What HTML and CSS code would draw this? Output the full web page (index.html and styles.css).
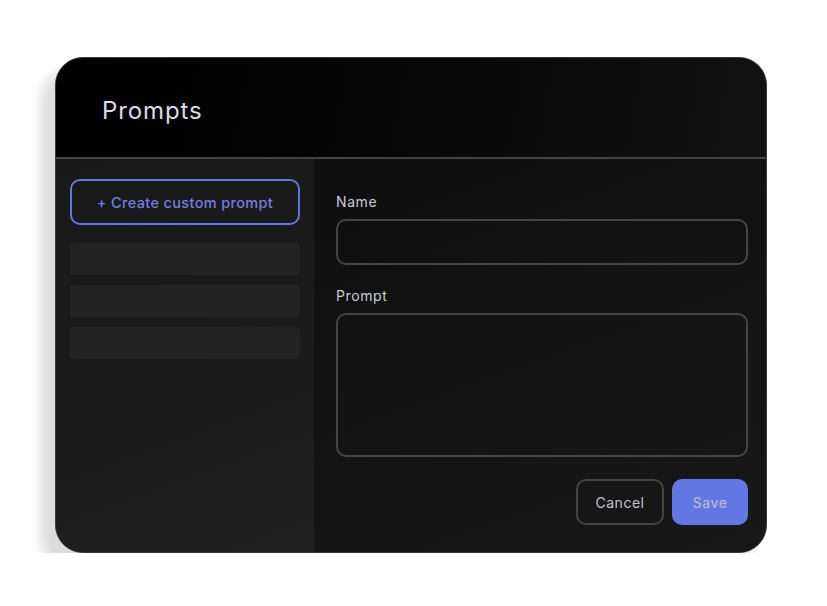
FILE: index.html
```html
<!DOCTYPE html>
<html lang="en">
<head>
<meta charset="utf-8">
<title>Prompts</title>
<link rel="stylesheet" href="styles.css">
</head>
<body>
<div class="stage">
  <div class="card">
    <header class="card-header">
      <h1 class="title">Prompts</h1>
    </header>
    <div class="card-body">
      <aside class="sidebar">
        <button class="create-btn">+ Create custom prompt</button>
        <div class="skeletons">
          <div class="skeleton"></div>
          <div class="skeleton"></div>
          <div class="skeleton"></div>
        </div>
      </aside>
      <main class="editor">
        <label class="field-label">Name</label>
        <div class="input"></div>
        <label class="field-label prompt-label">Prompt</label>
        <div class="textarea"></div>
        <div class="actions">
          <button class="btn btn-cancel">Cancel</button>
          <button class="btn btn-save">Save</button>
        </div>
      </main>
    </div>
  </div>
</div>
</body>
</html>
```

FILE: styles.css
```css
* { box-sizing: border-box; }

html, body {
  margin: 0;
  padding: 0;
  background: #ffffff;
  font-family: "Inter", "Open Sans", sans-serif;
}

.stage {
  padding: 57px 0 0 55px;
}

.card {
  width: 712px;
  height: 496px;
  border: 1px solid #3a3a3a;
  border-radius: 28px;
  overflow: hidden;
  background: #151515;
  box-shadow: -14px 14px 12px rgba(0, 0, 0, 0.14);
  display: flex;
  flex-direction: column;
}

.card-header {
  height: 101px;
  flex: none;
  border-bottom: 2px solid #444444;
  background: linear-gradient(100deg, #000000 0%, #050505 40%, #121212 100%);
  display: flex;
  align-items: center;
  padding-left: 46px;
}

.title {
  margin: 0;
  font-size: 24px;
  font-weight: 400;
  color: #dadbe3;
  letter-spacing: 0.9px;
  padding-top: 6px;
}

.card-body {
  flex: 1;
  display: grid;
  grid-template-columns: 258px 1fr;
}

.sidebar {
  background: linear-gradient(160deg, #181818 0%, #1c1c1c 60%, #202020 100%);
  padding: 20px 14px 0 14px;
}

.create-btn {
  width: 230px;
  height: 46px;
  border: 2px solid #6077e0;
  border-radius: 10px;
  background: transparent;
  color: #6c82e2;
  font-family: inherit;
  font-size: 14.5px;
  font-weight: 500;
  letter-spacing: 0.35px;
  display: block;
}

.skeletons {
  margin-top: 18px;
  display: flex;
  flex-direction: column;
  gap: 10px;
}

.skeleton {
  width: 230px;
  height: 32px;
  border-radius: 4px;
  background: #232323;
}

.editor {
  background: linear-gradient(160deg, #0e0e0e 0%, #131313 50%, #181818 100%);
  padding: 33px 18px 0 22px;
  display: flex;
  flex-direction: column;
}

.field-label {
  font-size: 14px;
  line-height: 20px;
  color: #c9cbd8;
  letter-spacing: 0.6px;
  margin-bottom: 7px;
}

.prompt-label {
  margin-top: 21px;
}

.input {
  height: 46px;
  border: 2px solid #464646;
  border-radius: 10px;
}

.textarea {
  height: 144px;
  border: 2px solid #464646;
  border-radius: 10px;
}

.actions {
  margin-top: 22px;
  display: flex;
  justify-content: flex-end;
  gap: 8px;
}

.btn {
  height: 46px;
  border-radius: 10px;
  font-family: inherit;
  font-size: 14px;
  font-weight: 400;
  letter-spacing: 0.5px;
}

.btn-cancel {
  width: 88px;
  border: 2px solid #444444;
  background: transparent;
  color: #c4c6d0;
}

.btn-save {
  width: 76px;
  border: none;
  background: #6178e4;
  color: #b3b7cc;
  font-weight: 500;
}
```
